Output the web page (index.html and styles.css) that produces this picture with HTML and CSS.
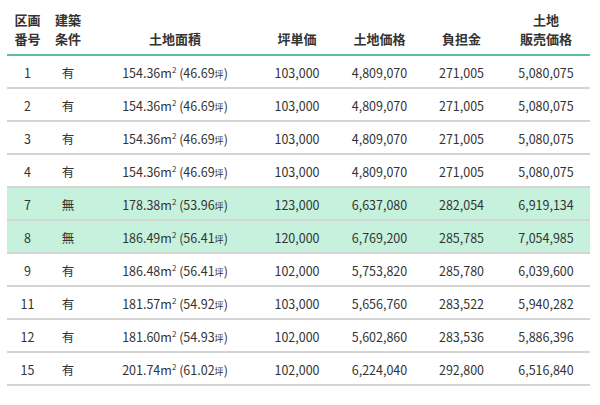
FILE: index.html
```html
<!DOCTYPE html>
<html lang="ja">
<head>
<meta charset="utf-8">
<link rel="stylesheet" href="styles.css">
</head>
<body>
<div class="wrap">
  <div class="row head">
    <div class="c c1">区画<br>番号</div>
    <div class="c c2">建築<br>条件</div>
    <div class="c c3">土地面積</div>
    <div class="c c4">坪単価</div>
    <div class="c c5">土地価格</div>
    <div class="c c6">負担金</div>
    <div class="c c7">土地<br>販売価格</div>
  </div>
  <div class="row"><div class="c c1">1</div><div class="c c2">有</div><div class="c c3">154.36m<sup>2</sup> (46.69<small>坪</small>)</div><div class="c c4">103,000</div><div class="c c5">4,809,070</div><div class="c c6">271,005</div><div class="c c7">5,080,075</div></div>
  <div class="row"><div class="c c1">2</div><div class="c c2">有</div><div class="c c3">154.36m<sup>2</sup> (46.69<small>坪</small>)</div><div class="c c4">103,000</div><div class="c c5">4,809,070</div><div class="c c6">271,005</div><div class="c c7">5,080,075</div></div>
  <div class="row"><div class="c c1">3</div><div class="c c2">有</div><div class="c c3">154.36m<sup>2</sup> (46.69<small>坪</small>)</div><div class="c c4">103,000</div><div class="c c5">4,809,070</div><div class="c c6">271,005</div><div class="c c7">5,080,075</div></div>
  <div class="row"><div class="c c1">4</div><div class="c c2">有</div><div class="c c3">154.36m<sup>2</sup> (46.69<small>坪</small>)</div><div class="c c4">103,000</div><div class="c c5">4,809,070</div><div class="c c6">271,005</div><div class="c c7">5,080,075</div></div>
  <div class="row hl"><div class="c c1">7</div><div class="c c2">無</div><div class="c c3">178.38m<sup>2</sup> (53.96<small>坪</small>)</div><div class="c c4">123,000</div><div class="c c5">6,637,080</div><div class="c c6">282,054</div><div class="c c7">6,919,134</div></div>
  <div class="row hl"><div class="c c1">8</div><div class="c c2">無</div><div class="c c3">186.49m<sup>2</sup> (56.41<small>坪</small>)</div><div class="c c4">120,000</div><div class="c c5">6,769,200</div><div class="c c6">285,785</div><div class="c c7">7,054,985</div></div>
  <div class="row"><div class="c c1">9</div><div class="c c2">有</div><div class="c c3">186.48m<sup>2</sup> (56.41<small>坪</small>)</div><div class="c c4">102,000</div><div class="c c5">5,753,820</div><div class="c c6">285,780</div><div class="c c7">6,039,600</div></div>
  <div class="row"><div class="c c1">11</div><div class="c c2">有</div><div class="c c3">181.57m<sup>2</sup> (54.92<small>坪</small>)</div><div class="c c4">103,000</div><div class="c c5">5,656,760</div><div class="c c6">283,522</div><div class="c c7">5,940,282</div></div>
  <div class="row"><div class="c c1">12</div><div class="c c2">有</div><div class="c c3">181.60m<sup>2</sup> (54.93<small>坪</small>)</div><div class="c c4">102,000</div><div class="c c5">5,602,860</div><div class="c c6">283,536</div><div class="c c7">5,886,396</div></div>
  <div class="row"><div class="c c1">15</div><div class="c c2">有</div><div class="c c3">201.74m<sup>2</sup> (61.02<small>坪</small>)</div><div class="c c4">102,000</div><div class="c c5">6,224,040</div><div class="c c6">292,800</div><div class="c c7">6,516,840</div></div>
</div>
</body>
</html>
```
FILE: styles.css
```css
html, body {
  margin: 0;
  padding: 0;
  background: #fff;
}
body {
  font-family: "Noto Sans CJK JP", "Noto Sans", sans-serif;
  font-size: 12.5px;
  color: #333;
}
.wrap {
  padding: 10px 10px 0 7px;
  width: 583px;
}
.row {
  display: grid;
  grid-template-columns: 41px 40px 172px 73px 92px 72px 93px;
  height: 29px;
  padding-top: 2px;
  align-items: center;
  border-bottom: 2px solid #d4d4d4;
}
.row.head {
  height: auto;
  padding-top: 0;
  align-items: end;
  line-height: 19px;
  font-size: 13px;
  font-weight: 700;
  padding-bottom: 6px;
  border-bottom: 2px solid #5dbf9c;
}
.row.hl {
  background: #c6f1dc;
}
.c {
  text-align: center;
  white-space: nowrap;
}
.c3 { padding-left: 2px; }
.c4 { padding-left: 1px; }
.c5 { padding-left: 1px; }
.c6 { padding-left: 1px; }
.c7 { padding-left: 5px; }
sup {
  font-size: 8px;
  vertical-align: 5px;
  line-height: 0;
}
small {
  font-size: 9px;
}
```
